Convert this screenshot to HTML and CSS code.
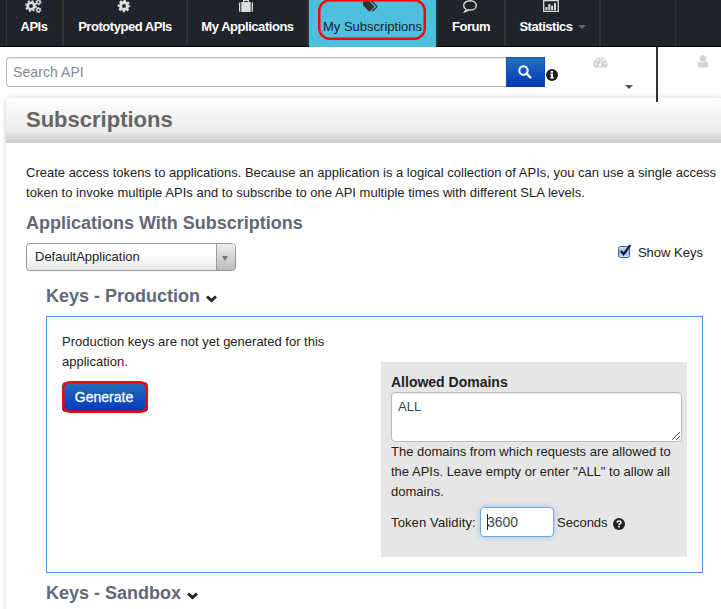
FILE: index.html
```html
<!DOCTYPE html>
<html lang="en">
<head>
<meta charset="utf-8">
<title>Subscriptions</title>
<link rel="stylesheet" href="styles.css">
</head>
<body>
<nav class="nav">
  <a class="item apis"><svg class="icon" width="18" height="14" viewBox="0 0 18 14"><circle cx="6" cy="6" r="3.3" fill="none" stroke="#ddd" stroke-width="2.6"/><circle cx="6" cy="6" r="5" fill="none" stroke="#ddd" stroke-width="1.8" stroke-dasharray="2 1.93"/><g fill="none" stroke="#ddd"><circle cx="13.5" cy="2.3" r="1.7" stroke-width="1.4"/><circle cx="13.5" cy="2.3" r="2.6" stroke-dasharray="1.3 1.42"/><circle cx="13.5" cy="10" r="1.7" stroke-width="1.4"/><circle cx="13.5" cy="10" r="2.6" stroke-dasharray="1.3 1.42"/></g></svg><span>APIs</span></a>
  <a class="item prototyped"><svg class="icon" width="14" height="14" viewBox="0 0 14 14"><circle cx="7" cy="6" r="3.4" fill="none" stroke="#ddd" stroke-width="3"/><circle cx="7" cy="6" r="5.3" fill="none" stroke="#ddd" stroke-width="2" stroke-dasharray="2.4 1.76" stroke-dashoffset="1.2"/></svg><span>Prototyped APIs</span></a>
  <a class="item applications"><svg class="icon" width="14" height="14" viewBox="0 0 14 14"><path fill="#ddd" d="M0 3.5Q0 2 1.3 2V12Q0 12 0 10.8ZM2.3 2H4V0H10V2H11.700V12H2.300ZM12.700 2Q14 2 14 3.500V10.800Q14 12 12.700 12ZM5.200 1V2H8.800V1Z" fill-rule="evenodd"/></svg><span>My Applications</span></a>
  <a class="item active"><svg class="icon" width="16" height="14" viewBox="0 0 16 14"><path fill="#333" d="M1 0H6L12 6.100Q12.500 6.800 12 7.400L8.100 11.300Q7.400 11.800 6.800 11.300L1 5.300Z"/><path fill="none" stroke="#333" stroke-width="1.300" d="M8.200-.3L14.600 6.100Q15 6.700 14.500 7.200L10.300 11.300"/><circle cx="3" cy="1" r=".9" fill="#4dbfdf"/></svg><span>My Subscriptions</span><i class="mark"></i></a>
  <a class="item forum"><svg class="icon" width="16" height="14" viewBox="0 0 16 14"><path fill="none" stroke="#ddd" stroke-width="1.400" d="M8 .8C11.800.8 14.300 2.900 14.300 5.400S11.800 10 8 10Q7 10 6.200 9.800Q4.800 11.400 2.800 11.800Q4.100 10.400 3.900 9Q1.700 7.700 1.700 5.400C1.700 2.900 4.200.8 8 .8Z"/></svg><span>Forum</span></a>
  <a class="item statistics"><svg class="icon" width="16" height="14" viewBox="0 0 16 14"><path fill="none" stroke="#ddd" stroke-width="1.300" d="M.7 0V11.300H15.300V0M0 .5H16"/><path fill="#ddd" d="M2.500 7H4.500V10H2.500ZM5.300 4H7.300V10H5.300ZM8.100 5.500H10.100V10H8.100ZM11 3H13V10H11Z"/></svg><span>Statistics</span><b class="caret"></b></a>
  <a class="item spare"></a>
</nav>

<section class="toolbar">
  <div class="search"><div class="field">Search API</div><button class="go"><svg width="14" height="14" viewBox="0 0 14 14"><circle cx="5.500" cy="5.500" r="4.200" fill="none" stroke="#fff" stroke-width="2"/><path d="M8.700 8.700L12.300 12.300" stroke="#fff" stroke-width="2.400" stroke-linecap="round"/></svg></button></div>
  <svg class="info" width="12" height="12" viewBox="0 0 12 12"><circle cx="6" cy="6" r="6" fill="#222"/><path fill="#fff" d="M4.800 2H7V3.700H4.800ZM4.200 4.600H7V8.300H7.800V9.600H4.200V8.300H5V5.800H4.200Z"/></svg>
  <div class="gauge"><svg width="15" height="12" viewBox="0 0 15 12"><path fill="#d3d3d3" d="M1.300 11.500A7 7 0 1 1 13.700 11.500Z"/><g fill="#fff"><circle cx="2.700" cy="7.700" r="1"/><circle cx="4.200" cy="4" r="1"/><circle cx="7.500" cy="2.500" r="1"/><circle cx="11" cy="4" r="1"/><circle cx="12.300" cy="7.700" r="1"/><circle cx="7.300" cy="9" r="1.500"/></g><path stroke="#fff" d="M7.300 9L8.800 4.500"/></svg><b class="caret"></b></div>
  <div class="divider"></div>
  <svg class="user" width="12" height="13" viewBox="0 0 12 13"><circle cx="6" cy="3.500" r="3.200" fill="#d3d3d3"/><path fill="#d3d3d3" d="M2.500 6Q6 9 9.500 6Q11.500 7 11.500 10.500Q11.500 12.500 9.500 12.500H2.500Q.5 12.500 .5 10.500Q.5 7 2.500 6Z"/></svg>
</section>

<main class="page">
  <h1>Subscriptions</h1>
  <div class="content">
    <p class="intro"><span>Create access tokens to applications. Because an application is a logical collection of APIs, you can use a single access</span><br><span class="wide">token to invoke multiple APIs and to subscribe to one API multiple times with different SLA levels.</span></p>
    <h2>Applications With Subscriptions</h2>
    <div class="choose">
      <div class="select"><span>DefaultApplication</span><div class="arrow"><b></b></div></div>
      <label class="show"><svg width="14" height="15" viewBox="0 0 14 15"><defs><linearGradient id="box" x2="0" y2="1"><stop stop-color="#d9e9fa"/><stop offset=".5" stop-color="#86b9ee"/><stop offset="1" stop-color="#c6ecff"/></linearGradient></defs><rect x=".6" y="2.500" width="11" height="11" rx="2" fill="url(#box)" stroke="#465a96"/><path d="M3 7L5.600 10.200L12.300 1.200" fill="none" stroke="#10152b" stroke-width="2.200"/></svg><span>Show Keys</span></label>
    </div>
    <section class="keys">
      <h2>Keys - Production <svg width="13" height="10" viewBox="0 0 13 10"><path d="M2 2.500L6.500 6.500L11 2.500" fill="none" stroke="#222" stroke-width="3"/></svg></h2>
      <div class="panel">
        <div class="status"><p>Production keys are not yet generated for this<br>application.</p><button class="generate">Generate<i class="mark"></i></button></div>
        <div class="domains">
          <strong>Allowed Domains</strong>
          <div class="area">ALL<svg width="8" height="8" viewBox="0 0 8 8"><path d="M0 8L8 0M4 8L8 4" stroke="#555" fill="none"/></svg></div>
          <p class="help"><span>The domains from which requests are allowed to</span><br><span>the APIs. Leave empty or enter "ALL" to allow all</span><br>domains.</p>
          <div class="validity"><span class="vl">Token Validity:</span><div class="number"><i></i>3600</div><span class="sec">Seconds</span><svg width="12" height="12" viewBox="0 0 12 12"><circle cx="6" cy="6" r="6" fill="#222"/><path d="M4 4.600Q4.200 3 6 3Q7.900 3 7.900 4.500Q7.900 5.400 6.800 5.900Q6.100 6.200 6.100 7" fill="none" stroke="#fff" stroke-width="1.500"/><rect x="5.200" y="7.800" width="1.700" height="1.600" fill="#fff"/></svg></div>
        </div>
      </div>
      <h2>Keys - Sandbox <svg width="13" height="10" viewBox="0 0 13 10"><path d="M2 2.500L6.500 6.500L11 2.500" fill="none" stroke="#222" stroke-width="3"/></svg></h2>
    </section>
  </div>
</main>
</body>
</html>
```

FILE: styles.css
```css
* { box-sizing: border-box; }
body {
  margin: 0;
  height: 609px;
  overflow: hidden;
  background: #fff;
  color: #222;
  font: 13px/20px "Liberation Sans", Arial, sans-serif;
}
p, h1, h2 { margin: 0; }
.nav {
  display: flex;
  height: 47px;
  padding-left: 6px;
  background: #1f242a;
  border-bottom: 1px solid #000;
}
.item {
  position: relative;
  border-right: 2px solid #333;
  color: #fff;
  font-weight: bold;
  letter-spacing: -0.46px;
  white-space: nowrap;
  display: grid;
  grid-template-rows: 17px 20px;
  justify-items: center;
  align-content: start;
}
.item .icon { display: block; }
.item.apis { width: 58px; border-left: 1px solid #333; padding-right: 1px; }
.prototyped { width: 124px; }
.prototyped .icon { margin-right: 3px; }
.applications { width: 121px; }
.applications .icon { margin-right: 3px; }
.item.active {
  width: 129px;
  height: 47px;
  background: #4dbfdf;
  color: #222;
  font-weight: normal;
  letter-spacing: 0;
}
.active .icon { margin-right: 5px; }
.forum { width: 68px; }
.forum .icon { margin-right: 3px; }
.item.statistics { width: 95px; grid-template-columns: 52px 7px; column-gap: 6px; justify-content: center; }
.statistics .icon { grid-column: 1 / 3; margin-right: 3px; }
.item.spare { width: 75px; border-right-width: 1px; }
.caret {
  border: 4px solid transparent;
  border-top-color: #666;
  border-bottom: 0;
  width: 0;
  height: 0;
}
.statistics .caret { align-self: center; }
.active .mark {
  position: absolute;
  left: 9px;
  top: -1px;
  width: 108px;
  height: 41px;
  border: 2px solid #f00;
  border-radius: 12px;
  box-shadow: inset 0 0 0 .5px #f00;
}
.toolbar { display: flex; height: 50px; padding-left: 6px; align-items: flex-start; }
.search { display: flex; margin-top: 10px; }
.field {
  width: 500px;
  height: 30px;
  padding: 0 6px;
  border: 1px solid #bbb;
  border-right: 0;
  border-radius: 4px 0 0 4px;
  box-shadow: inset 0 1px 1px #eee;
  color: #888;
  font-size: 14px;
  letter-spacing: .08px;
  line-height: 29px;
}
.go {
  width: 39px;
  height: 30px;
  padding: 2px 1px 0 0;
  border: 1px solid #1649a0;
  border-color: #1a5a9e #1649b8 #0336a8;
  background: linear-gradient(#2570bd, #0038b8);
}
.info { margin: 22px 0 0 1px; }
.gauge { width: 99px; padding: 9px 0 0 35px; display: flex; height: 50px; }
.gauge .caret { margin: 29px 0 0 17px; border-top-color: #555; }
.divider { width: 2px; height: 55px; background: #333; position: relative; z-index: 2; margin-left: -1px; }
.user { margin: 8px 0 0 39px; }
.page { margin-left: 6px; height: 520px; border-radius: 6px 0 0; box-shadow: 0 0 6px #ddd; }
h1 {
  height: 46px;
  padding-left: 20px;
  border-top: 1px solid #eee;
  border-radius: 6px 0 0;
  background: linear-gradient(#fff, #ebebeb 75%, #cbcbcb);
  box-shadow: 0 3px 4px -1px #ccc;
  color: #666;
  font-size: 22px;
  line-height: 44px;
}
.content { position: relative; background: #fff; height: 474px; padding: 20px 18px 0 20px; }
.intro { white-space: nowrap; }
.wide { letter-spacing: .02px; }
h2 { color: #626878; font-size: 18px; line-height: 20px; white-space: nowrap; }
.content > h2 { margin-top: 10px; }
.choose { display: flex; justify-content: space-between; margin-top: 10px; }
.select {
  display: flex;
  justify-content: space-between;
  width: 210px;
  height: 28px;
  padding-left: 8px;
  border: 1px solid #999;
  border-radius: 4px;
  background: linear-gradient(#fff 40%, #e8e8e8);
  line-height: 26px;
}
.arrow {
  width: 19px;
  border-left: 1px solid #999;
  border-radius: 0 3px 3px 0;
  background: linear-gradient(#eee, #bbb);
}
.arrow b { display: block; margin: 12px 0 0 5px; width: 0; border: 3px solid transparent; border-top: 5px solid #777; border-bottom: 0; }
.show { display: flex; gap: 6px; align-items: flex-start; }
.show svg { margin-top: 1px; }
.keys { margin: 15px 0 0 20px; }
.keys h2 svg { vertical-align: -2px; }
.panel {
  display: flex;
  align-items: flex-start;
  justify-content: space-between;
  height: 257px;
  margin: 10px 0;
  padding: 15px 15px 0;
  border: 1px solid #508eee;
}
.generate {
  position: relative;
  display: block;
  width: 86px;
  height: 30px;
  margin-top: 10px;
  padding: 0 2px 0 0;
  border: 0;
  border-radius: 4px;
  background: linear-gradient(#2570bd, #0038b8);
  color: #fff;
  font: 14px/30px "Liberation Sans", Arial, sans-serif;
  -webkit-text-stroke: .3px #fff;
}
.generate .mark { position: absolute; inset: -1px 0; border: 2px solid #f00; border-radius: 8px; box-shadow: inset 0 0 0 .5px #f00; }
.domains { width: 306px; height: 195px; margin-top: 30px; padding: 10px 5px 0 10px; background: #e6e6e6; }
.domains strong { display: block; font-size: 14px; line-height: 20px; }
.area {
  position: relative;
  height: 50px;
  padding: 4px 6px;
  border: 1px solid #bbb;
  border-radius: 4px;
  background: #fff;
  box-shadow: inset 0 1px 1px #eee;
  color: #444;
}
.area svg { position: absolute; right: 1px; bottom: 1px; }
.help { white-space: nowrap; }
.validity { display: flex; align-items: center; margin-top: 5px; white-space: nowrap; }
.vl { width: 89px; padding-top: 2px; letter-spacing: .13px; }
.number {
  width: 74px;
  height: 30px;
  padding-left: 6px;
  border: 1px solid #6aabe8;
  border-radius: 4px;
  background: #fff;
  box-shadow: 0 0 6px #9ac3ea;
  color: #444;
  font-size: 14px;
  line-height: 28px;
  display: flex;
}
.number i { width: 1px; height: 16px; margin: 6px -1px 0 0; background: #222; }
.sec { padding-top: 2px; width: 56px; margin-left: 3px; }
.validity svg { margin-top: 3px; }
```
